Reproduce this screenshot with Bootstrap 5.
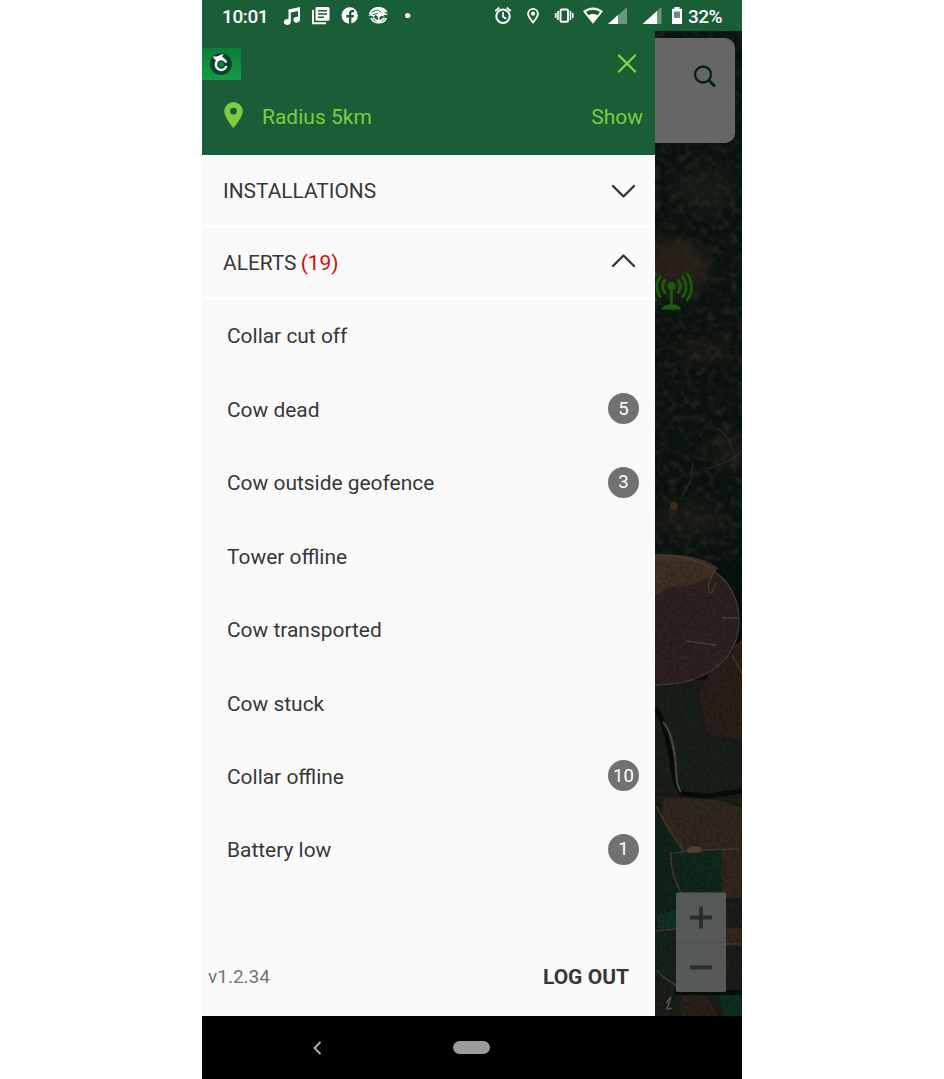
<!DOCTYPE html>
<html lang="en">
<head>
<meta charset="utf-8">
<meta name="viewport" content="width=device-width, initial-scale=1">
<title>Alerts menu</title>
<link href="https://cdn.jsdelivr.net/npm/bootstrap@5.3.0/dist/css/bootstrap.min.css" rel="stylesheet">
<style>
  body { font-family: Roboto, "Liberation Sans", sans-serif; background: #fff; color: #373737; font-size: 21px; line-height: 25px; }
  svg { display: block; flex: none; }
  .phone { width: 540px; height: 1079px; }
  .green { background: #1a5e37; }
  .status { height: 31px; color: #fff; font-size: 19px; font-weight: 500; padding: 2px 20px 0 20px; }
  .status .clock { width: 58px; letter-spacing: -.4px; }
  .status .battery { margin-left: 2px; letter-spacing: -.5px; }
  .drawer { width: 453px; background: #fafafa; }
  .head { height: 124px; color: #7fcb42; }
  .head-top { height: 65px; padding-right: 18px; }
  .head-row { height: 59px; padding: 0 12px 16px 22px; }
  .head-row svg { margin-top: -5px; }
  .section { height: 72px; padding: 3px 19px 0 21px; border-bottom: 2px solid #fff; font-size: 20.9px; }
  .section svg { margin-top: -2px; }
  .section .up { margin-top: -5px; }
  .red { color: #d90a0a; margin-left: -1px; }
  .alert-row { height: 73.43px; padding: 2.5px 16px 0 25px; font-size: 20.93px; }
  .count { width: 31px; height: 31px; margin-top: -3px; padding-top: 1px; background: #717171; color: #fff; font-size: 18.5px; }
  .version { font-size: 19px; color: #757575; margin-top: -2px; }
  .foot { height: 78px; padding: 0 26px 0 6px; }
  .navkeys { height: 63px; background: #000; }
  .back { margin-left: 111px; }
  .home { width: 37px; height: 13px; background: #9b9b9b; margin-left: 131px; }
</style>
</head>
<body>
<div class="phone mx-auto d-flex flex-column overflow-hidden">
  <div class="status green d-flex align-items-center">
    <span class="clock">10:01</span>
    <svg width="138" height="31" viewBox="280 1 138 31" fill="#fff">
      <path d="M288.500 9.500 300 7v12.500a3.300 3 0 1 1-2-2.600V11l-7.200 1.500v9.500a3.500 3 0 1 1-2.300-2.800z"/>
      <path d="M313 10v13.200h13" fill="none" stroke="#fff" stroke-width="2"/>
      <rect x="315.500" y="7" width="14" height="13.800" rx="1.500"/>
      <path d="M318 10.700h9M318 14h9M318 17.200h6" stroke="#1a5e37" stroke-width="1.500"/>
      <circle cx="349.700" cy="15.500" r="8.200"/>
      <path d="M349 24v-6.500h-2.800v-2.500H349v-1.600c0-2.300 1.300-3.400 3.300-3.400h1.700v2.300h-1.300c-1 0-1.300.5-1.300 1.300V15h2.600l-.4 2.500h-2.200V24z" fill="#1a5e37"/>
      <path d="M369.500 12.500c1.500-3.700 5-5.500 9.200-5.500 4 0 7.500 1.800 9 5.500l-4-.5 4.500 3h-5l2 1.500-4-.5-2.500 1.500-3-2.500-2 2-3-1.500-2.500.5 2-2h-1.500z"/>
      <path d="M371 18c1.500 3.500 4.500 4.800 7.700 4.800s6.200-1.300 7.700-4.800M378.700 16v6.500M373 18l5 3.500M384.500 18l-5 3.500" stroke="#fff" stroke-width="1.600" fill="none"/>
      <path d="M371.500 12l6-2 4 2.500M373 14.500l5-1" stroke="#1a5e37" stroke-width=".9" fill="none"/>
      <circle cx="407.700" cy="15.500" r="2.600"/>
    </svg>
    <svg class="ms-auto" width="196" height="31" viewBox="490 1 196 31" fill="#fff">
      <g fill="none" stroke="#fff" stroke-width="2"><circle cx="503" cy="16.300" r="6.700"/><path d="M503 12v4.700l3.300 2M495.300 11l4-3.500M510.700 11l-4-3.500" stroke-width="1.700"/></g>
      <path d="M533 22.500c-3-3.700-4.900-6.200-4.900-8.700a4.900 4.900 0 0 1 9.800 0c0 2.500-1.900 5-4.900 8.700z" fill="none" stroke="#fff" stroke-width="1.900"/><circle cx="533" cy="13.700" r="2.100"/>
      <rect x="560.500" y="9.500" width="7.500" height="12.300" rx="1" fill="none" stroke="#fff" stroke-width="1.900"/>
      <path d="M558 11v9M570.500 11v9M555.700 13v5M572.800 13v5" stroke="#fff" stroke-width="1.600"/>
      <path d="M583 11.300c6-5.200 14-5.200 20 0L593 23.800z"/><path d="M586 11.900c4.500-3 9.500-3 14 0l-2.500 3.300c-3-1.700-6-1.700-9 0z" fill="#1a5e37"/>
      <path d="M627 7v17h-19z" opacity=".35"/><path d="M618 15v9h-10z"/>
      <path d="M661.500 7v17h-19z" opacity=".35"/><path d="M657 11v13h-14.500z"/>
      <path d="M674.500 7h5v1.800h2.500V24h-10V8.800h2.500z"/><path d="M674 11.500h6v6.500h-6z" fill="#669078"/>
    </svg>
    <span class="battery text-nowrap">32%</span>
  </div>

  <div class="d-flex flex-grow-1">
    <div class="drawer d-flex flex-column">
      <div class="head green">
        <div class="head-top d-flex align-items-center justify-content-between">
          <svg width="39" height="32" viewBox="0 0 39 32">
            <defs><linearGradient id="lg" x1="0" y1="0" x2="0" y2="1"><stop offset="0" stop-color="#0b7d3b"/><stop offset="1" stop-color="#169a48"/></linearGradient></defs>
            <rect width="39" height="32" fill="url(#lg)"/>
            <circle cx="19" cy="16" r="11" fill="#06452a"/>
            <path d="M24.200 14.500a5.400 5.400 0 1 0 .2 3.500" fill="none" stroke="#fff" stroke-width="2.500"/>
            <path d="M11 8.500c2.500-.3 4 .3 5.500-.5 1.500-1.200 3-1.800 5-1.800l-1.500 2.800 3 1.300-6.500 2.200-2 2c.3-2.200-2.500-3-3.500-6z" fill="#fff"/>
            <circle cx="19.200" cy="16.300" r="2.700" fill="#0d8140"/>
          </svg>
          <svg width="20" height="20" viewBox="0 0 20 20" stroke="#8bd447" stroke-width="2.200" stroke-linecap="round"><path d="M2 1.500l16 16M18 1.500 2 17.500"/></svg>
        </div>
        <div class="head-row d-flex align-items-center">
          <svg width="19" height="26" viewBox="0 0 19 26"><path fill="#7fcb42" fill-rule="evenodd" d="M9.500 0a9.200 9.200 0 0 1 9.200 9.200c0 6.300-9.200 16.800-9.200 16.800S.3 15.500.3 9.200A9.200 9.200 0 0 1 9.500 0zm0 5.800a3.400 3.400 0 1 0 0 6.800 3.400 3.400 0 0 0 0-6.800z"/></svg>
          <span style="margin-left:19px">Radius 5km</span>
          <span class="ms-auto">Show</span>
        </div>
      </div>

      <div class="section d-flex align-items-center justify-content-between">
        <span>INSTALLATIONS</span>
        <svg width="25" height="14" viewBox="0 0 25 14" fill="none" stroke="#333" stroke-width="2.300" stroke-linecap="round" stroke-linejoin="round"><path d="M2 2 12.500 12.500 23 2"/></svg>
      </div>
      <div class="section d-flex align-items-center justify-content-between">
        <span>ALERTS <span class="red">(19)</span></span>
        <svg class="up" width="25" height="14" viewBox="0 0 25 14" fill="none" stroke="#333" stroke-width="2.300" stroke-linecap="round" stroke-linejoin="round"><path d="M2 12 12.500 1.500 23 12"/></svg>
      </div>

      <div class="alert-row d-flex align-items-center justify-content-between">Collar cut off</div>
      <div class="alert-row d-flex align-items-center justify-content-between">Cow dead<span class="count rounded-circle d-flex align-items-center justify-content-center">5</span></div>
      <div class="alert-row d-flex align-items-center justify-content-between">Cow outside geofence<span class="count rounded-circle d-flex align-items-center justify-content-center">3</span></div>
      <div class="alert-row d-flex align-items-center justify-content-between">Tower offline</div>
      <div class="alert-row d-flex align-items-center justify-content-between">Cow transported</div>
      <div class="alert-row d-flex align-items-center justify-content-between">Cow stuck</div>
      <div class="alert-row d-flex align-items-center justify-content-between">Collar offline<span class="count rounded-circle d-flex align-items-center justify-content-center">10</span></div>
      <div class="alert-row d-flex align-items-center justify-content-between">Battery low<span class="count rounded-circle d-flex align-items-center justify-content-center">1</span></div>

      <div class="foot mt-auto d-flex align-items-center justify-content-between">
        <span class="version">v1.2.34</span>
        <span class="fw-bold">LOG OUT</span>
      </div>
    </div>

    <!-- dimmed satellite map behind the drawer -->
    <svg width="87" height="985" viewBox="655 31 87 985">
      <defs>
        <filter id="trees" x="0" y="0" width="100%" height="100%" color-interpolation-filters="sRGB"><feTurbulence type="fractalNoise" baseFrequency=".13" numOctaves="5" seed="8"/><feColorMatrix values="0 0 0 0 .2  0 0 0 0 .19  0 0 0 0 .15  2 1.500 0 0 -1.550"/></filter>
        <filter id="grain" x="0" y="0" width="100%" height="100%" color-interpolation-filters="sRGB"><feTurbulence type="fractalNoise" baseFrequency=".3" numOctaves="3" seed="3"/><feColorMatrix values="0 0 0 0 0  0 0 0 0 0  0 0 0 0 0  1.500 0 0 0 -.6"/></filter>
        <filter id="soft" x="-30%" y="-30%" width="160%" height="160%" color-interpolation-filters="sRGB"><feGaussianBlur stdDeviation="8"/></filter>
        <filter id="blend" x="0" y="0" width="100%" height="100%" color-interpolation-filters="sRGB"><feGaussianBlur stdDeviation=".6"/></filter>
      </defs>
      <rect x="655" y="31" width="87" height="985" fill="#09120f"/>
      <g filter="url(#soft)">
        <ellipse cx="672" cy="268" rx="38" ry="30" fill="#261f17"/>
        <ellipse cx="705" cy="190" rx="30" ry="26" fill="#141a15"/>
        <ellipse cx="706" cy="352" rx="28" ry="12" fill="#1d1814"/>
        <ellipse cx="730" cy="450" rx="22" ry="18" fill="#191914"/>
        <ellipse cx="690" cy="520" rx="40" ry="18" fill="#171814"/>
      </g>
      <rect x="655" y="31" width="87" height="530" filter="url(#trees)" opacity=".5"/>
      <g filter="url(#blend)">
      <path d="M707 469l16-6 10-4 9-9M718 428l10 10 6 14M680 500l10-18 3-20" fill="none" stroke="#40342b" stroke-width="1.300" opacity=".6"/>
      <circle cx="674" cy="506" r="4" fill="#4b3024" opacity=".8"/>
      <path d="M655 680h87v336h-87z" fill="#1b1d18"/>
      <path d="M715 660l27-20v100l-35-5-8-40z" fill="#2a1f1b"/>
      <path d="M655 700l32-12 20 46 35 12v40l-62 10-25-30z" fill="#19201a"/>
      <path d="M655 555c50-1 83 24 84 65 0 40-34 65-84 65z" fill="#2e2220"/>
      <path d="M655 555c30-2 52 4 63 13-9 15-30 18-41 19-9-3-15 8-22 8z" fill="#403025"/>
      <path d="M655 555c50-1 83 24 84 65 0 40-34 65-84 65" fill="none" stroke="#4b3d33" stroke-width="1.300"/>
      <path d="M715 572c-8 8-8 18-4 21 3-1 2-6 5-10M686 641l30 4M722 618h16M732 655l12 22" fill="none" stroke="#4d4035" stroke-width="1.300"/>
      <path d="M655 708c8 10 12 28 16 48 3 18 3 30 12 38l25 2 34-5" fill="none" stroke="#070d0a" stroke-width="5"/>
      <path d="M663 722c7 8 10 20 12 36 2 14 0 26 6 34" fill="none" stroke="#4d4539" stroke-width="2.300"/>
      <path d="M664 797l55 3 23 8v90h-20v-48l-40 2-22-34z" fill="#32271f"/>
      <path d="M655 812l27 40-13 4 4 26 12 18-30 15z" fill="#11241a"/>
      <path d="M671 852l51-1v70h-30c-10-18-22-38-21-69z" fill="#11281a"/>
      <path d="M655 932h45v65c-15-11-38-12-45-25z" fill="#15231a"/>
      <path d="M658 915l18-6v19h-19z" fill="#113326"/>
      <path d="M718 993h24v23h-18z" fill="#0c301e"/>
      <path d="M726 928h16v18h-16z" fill="#342620"/>
      <path d="M718 1016l-14-23-22-5-1 28z" fill="#292019"/>
      <path d="M656 806l15 26 12 17M673 853l23-3 43-1M671 852c-1 24 9 43 21 50M655 931l21-2M657 970c5 10 20 12 25 22M742 944h-20" fill="none" stroke="#473a30" stroke-width="1.500"/>
      <path d="M687 849l4-3 9 1 2 5-14 1z" fill="#5a4333"/>
      <path d="M666 1003l5-6-4 12 5-1" fill="none" stroke="#586052" stroke-width="1.500"/>
      <path d="M675 990h67v5h-67z" fill="#080e0b"/>
      </g>
      <rect x="655" y="561" width="87" height="455" filter="url(#grain)" opacity=".4"/>
      <path d="M655 38h70a10 10 0 0 1 10 10v85a10 10 0 0 1-10 10h-70z" fill="#666"/>
      <g fill="none" stroke="#072017" stroke-width="2.300"><circle cx="703" cy="74.500" r="8"/><path d="M709 80.500l6 6" stroke-width="3"/></g>
      <g fill="none" stroke="#176009" stroke-width="2.600">
        <path d="M677.500 279.500a10 10 0 0 1 0 14M682 276a16 16 0 0 1 0 21.500M686.500 273a22 22 0 0 1 0 28M665.500 279.500a10 10 0 0 0 0 14M661 276a16 16 0 0 0 0 21.500M656.500 273a22 22 0 0 0 0 28M671.500 286v20"/>
      </g>
      <circle cx="671.500" cy="286" r="4" fill="#176009"/>
      <path d="M662 309.500c0-3 4-5 9.500-5s9.500 2 9.500 5z" fill="#176009"/>
      <rect x="676" y="892.500" width="50" height="99.500" rx="1.500" fill="#5d605e" fill-opacity=".9"/>
      <path d="M676 942.500h50" stroke="#4c514e"/>
      <path d="M690 917.500h22M701 906.500v22M690 967.500h22" stroke="#2a2d2b" stroke-width="3.800"/>
    </svg>
  </div>

  <div class="navkeys d-flex align-items-center">
    <svg class="back" width="9" height="14" viewBox="0 0 9 14" fill="none" stroke="#b5b5b5" stroke-width="1.800"><path d="M7.500 1 1.500 7l6 6"/></svg>
    <span class="home rounded-pill"></span>
  </div>
</div>
<script src="https://cdn.jsdelivr.net/npm/bootstrap@5.3.0/dist/js/bootstrap.bundle.min.js"></script>
</body>
</html>
